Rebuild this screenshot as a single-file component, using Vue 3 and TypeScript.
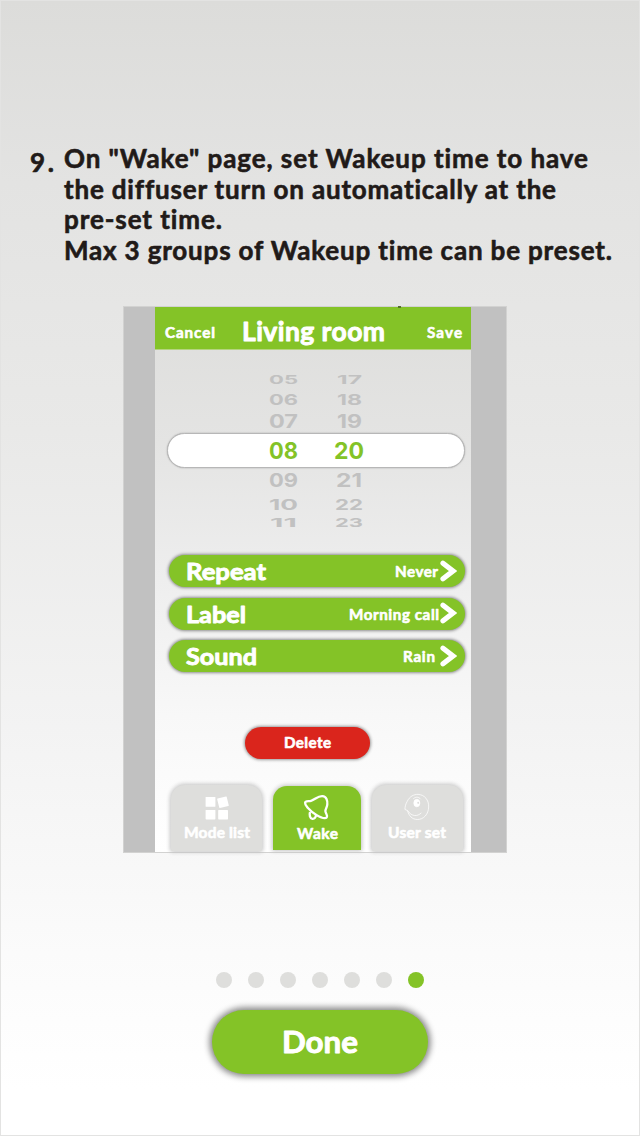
<script setup lang="ts">
import { h } from 'vue'

interface LabelProps {
  text: string
  w: number
  size: number
  box: number
  base: number
  stretch?: boolean
}

// One line of text fitted to a given width, with its baseline at `base` inside a box of height `box`.
const FitText = (p: LabelProps) =>
  h('svg', { width: p.w, height: p.box, class: 'fit' }, [
    h(
      'text',
      {
        x: 0,
        y: p.base,
        'font-size': p.size,
        textLength: p.w,
        lengthAdjust: p.stretch ? 'spacingAndGlyphs' : 'spacing'
      },
      p.text
    )
  ])
FitText.props = ['text', 'w', 'size', 'box', 'base', 'stretch']

const lines = [
  { text: 'On "Wake" page, set Wakeup time to have', w: 524 },
  { text: 'the diffuser turn on automatically at the', w: 492 },
  { text: 'pre-set time.', w: 158 },
  { text: 'Max 3 groups of Wakeup time can be preset.', w: 548 }
]

// Each wheel row: hour, minute, box height, glyph size, baseline and widths.
const wheel = [
  { a: '05', b: '17', box: 17, base: 14, size: 11.6, wa: 29, wb: 25 },
  { a: '06', b: '18', box: 20, base: 18.3, size: 15, wa: 29, wb: 25 },
  { a: '07', b: '19', box: 26, base: 21, size: 18.6, wa: 29, wb: 25 },
  { a: '08', b: '20', box: 35, base: 25, size: 23, wa: 29, wb: 30, on: true },
  { a: '09', b: '21', box: 26, base: 18.8, size: 18.8, wa: 29, wb: 26 },
  { a: '10', b: '22', box: 19, base: 16, size: 15, wa: 29, wb: 28 },
  { a: '11', b: '23', box: 19, base: 14, size: 12, wa: 27, wb: 28 }
]

const rows = [
  { name: 'Repeat', nw: 80, value: 'Never', vw: 43, gap: 2 },
  { name: 'Label', nw: 60, value: 'Morning call', vw: 90, gap: 1 },
  { name: 'Sound', nw: 71, value: 'Rain', vw: 32, gap: 5 }
]

const dots = [0, 1, 2, 3, 4, 5, 6]
</script>

<template>
  <main class="page">
    <section class="step">
      <FitText class="num" text="9." :w="24" :size="26" :box="31" :base="27.3" />
      <div class="lines">
        <FitText v-for="l in lines" :key="l.text" :text="l.text" :w="l.w" :size="26" :box="30.6" :base="24" />
      </div>
    </section>

    <section class="device">
      <i class="speck"></i>
      <div class="screen">
        <header class="bar">
          <FitText text="Cancel" :w="50" :size="15.2" :box="43" :base="31" />
          <FitText class="title" text="Living room" :w="143" :size="26.5" :box="43" :base="34" />
          <FitText text="Save" :w="35" :size="15.2" :box="43" :base="31" />
        </header>

        <div class="wheel">
          <div v-for="r in wheel" :key="r.a" class="tick" :class="{ on: r.on }">
            <span class="cell"><FitText :stretch="true" :text="r.a" :w="r.wa" :size="r.size" :box="r.box" :base="r.base" /></span>
            <span class="cell"><FitText :stretch="true" :text="r.b" :w="r.wb" :size="r.size" :box="r.box" :base="r.base" /></span>
          </div>
        </div>

        <div class="options">
          <div v-for="r in rows" :key="r.name" class="option">
            <FitText class="heavy" :stretch="true" :text="r.name" :w="r.nw" :size="23.5" :box="32" :base="24.7" />
            <span class="fill"></span>
            <FitText :text="r.value" :w="r.vw" :size="15.2" :box="32" :base="22" />
            <svg class="chev" :class="'gap' + r.gap" width="17" height="22" viewBox="0 0 17 22">
              <path d="M3 3.2 L13 11 L3 18.8" />
            </svg>
          </div>
        </div>

        <div class="delete"><FitText text="Delete" :w="47" :size="15.2" :box="32" :base="21" /></div>

        <nav class="tabs">
          <div class="tab">
            <svg class="icon" width="28" height="28" viewBox="0 0 28 28">
              <rect x="2.6" y="4" width="9.8" height="9.8" rx=".6" />
              <rect x="15" y="4.3" width="9.8" height="9.8" rx=".6" transform="rotate(-14 20 9)" />
              <rect x="2.6" y="17" width="9.8" height="9.4" rx=".6" />
              <rect x="15.2" y="17" width="9.8" height="9.4" rx=".6" />
            </svg>
            <FitText text="Mode list" :w="66" :size="15.5" :box="24" :base="17" />
          </div>
          <div class="tab active">
            <svg class="icon line" width="28" height="28" viewBox="0 0 28 28">
              <path d="M2.1 8.7 C2.3 6.8 5.3 7.4 8 6.8 C12.2 5.8 14.4 2 19.3 2.2 C23.6 2.5 24.6 6.5 24.3 10.4 C24.2 13.2 22.4 14.9 22.4 17.3 C22.5 19.4 25 21.4 23.8 23.2 C22.4 25.1 18.1 23.8 13.8 21.3 C9.5 19 6.9 16.1 4.4 13.4 C3 11.9 2 10.3 2.1 8.7 Z" />
              <path d="M7 18 C6.2 20.8 6.8 24.6 9.4 24.8 C11.7 25 12.8 23.3 13 21" />
            </svg>
            <FitText text="Wake" :w="41" :size="15.5" :box="24" :base="17" />
          </div>
          <div class="tab user">
            <svg class="icon face" width="28" height="30" viewBox="0 0 28 30">
              <path d="M3.5 9 C6 3.8 10.5 1.3 15.2 1.5 C22.2 1.8 26.7 7.5 26.5 15 C26.3 22.7 21.2 28.5 14.2 28.4 C8.9 28.2 5.4 24.7 3.8 18.8 L1.1 17.6 C1.2 14.2 1.9 11.7 3.5 9 Z" />
              <path d="M3.8 18.8 C8.7 25.8 14.4 25.2 18.7 21.3 M10 6.2 C12.8 3.7 16 4.2 18 6.7" />
              <ellipse class="white" cx="13.8" cy="10.8" rx="3.2" ry="4" />
              <ellipse class="pupil" cx="15.2" cy="10.5" rx=".7" ry="1.2" />
            </svg>
            <FitText text="User set" :w="58" :size="15.5" :box="24" :base="17" />
          </div>
        </nav>
      </div>
    </section>

    <div class="dots"><i v-for="d in dots" :key="d" :class="{ current: d === 6 }"></i></div>
    <button class="done"><FitText class="heavy" :stretch="true" text="Done" :w="76" :size="30" :box="64" :base="43" /></button>
  </main>
</template>

<style>
body { margin: 0; }
.fit { display: block; overflow: visible; flex: none; }
.fit text {
  fill: currentColor;
  stroke: currentColor;
  stroke-width: 0.6px;
  stroke-linejoin: round;
  font-weight: 700;
  font-variant-ligatures: none;
}
.heavy text, .title text { stroke-width: 0.9px; }
.tick text { font-family: Inter, sans-serif; stroke-width: 0; }
</style>

<style scoped>
.page {
  box-sizing: border-box;
  width: 640px;
  height: 1136px;
  padding-top: 143px;
  border: 1px solid #e3e3e2;
  background: linear-gradient(#dcdcda 0%, #e3e3e2 16%, #e9e9e8 38%, #f3f3f3 64%, #fbfbfb 84%, #fff 96%);
  color: #211a18;
  font-family: Lato, "Liberation Sans", sans-serif;
}
.step { display: flex; height: 162px; padding-left: 29px; }
.num { padding-top: 1px; }
.lines { padding-left: 10px; }
.device {
  position: relative;
  box-sizing: border-box;
  width: 384px;
  height: 547px;
  margin-left: 122px;
  padding: 0 35px 0 31px;
  border: 1px solid #d2d2d1;
  background: #c1c1c1;
}
.speck {
  position: absolute;
  left: 274px;
  top: -1px;
  width: 3px;
  height: 2px;
  background: #55702f;
}
.screen {
  height: 545px;
  background: linear-gradient(#dededc, #e4e4e3 25%, #eeeeee 50%, #f8f8f8 75%, #fff);
}
.bar {
  display: flex;
  justify-content: space-between;
  box-sizing: border-box;
  height: 43px;
  padding: 0 9px 0 10px;
  border-bottom: 1px solid #b5d47f;
  background: #84c327;
  color: #fff;
}
.title { margin-right: 15px; }
.wheel { height: 205px; padding: 20px 6px 0 12px; color: #c1c1c1; }
.tick { display: flex; padding-left: 84px; }
.tick.on {
  box-sizing: border-box;
  height: 34.5px;
  padding-left: 82.5px;
  border: 1.5px solid #b7b7b7;
  border-radius: 18px;
  background: #fff;
  color: #84c327;
  box-shadow: 0 0 1.5px #999;
}
.cell { display: flex; justify-content: center; width: 65.5px; }
.options { display: flex; flex-direction: column; gap: 10.5px; padding: 0 6.5px 0 14px; margin-top: -20px; }
.option {
  display: flex;
  align-items: center;
  height: 32px;
  padding: 0 8px 0 16.5px;
  border-radius: 17px;
  background: #84c327;
  color: #fff;
  box-shadow: 0 0 3px 1px #8d8d8d;
}
.fill { flex: 1; }
.chev { fill: none; stroke: #fff; stroke-width: 5.2; stroke-linecap: round; margin-top: -1px; }
.gap2 { margin-left: 2px; }
.gap1 { margin-left: 1px; }
.gap5 { margin-left: 4.5px; }
.delete {
  display: flex;
  justify-content: center;
  width: 125px;
  height: 32px;
  margin: 54.5px 0 0 90px;
  border-radius: 16px;
  background: #da251c;
  color: #fff;
  box-shadow: 0 0 3px 1px #999;
}
.tabs { display: flex; align-items: flex-start; gap: 11px; padding-left: 16px; margin-top: 26px; }
.tab {
  display: flex;
  flex-direction: column;
  align-items: center;
  box-sizing: border-box;
  width: 91px;
  height: 66px;
  padding-top: 8px;
  border-radius: 14px 14px 2px 2px;
  background: #dededc;
  color: #fff;
  box-shadow: 0 0 4px 1px #c2c2c2;
}
.tab.active {
  width: 88px;
  height: 64px;
  margin-top: 1px;
  border-radius: 14px 14px 0 0;
  background: #84c327;
}
.tab.user { padding-right: 1px; }
.icon { flex: none; height: 28px; fill: #fff; }
.line { fill: none; stroke: #fff; stroke-width: 2.3; stroke-linejoin: round; }
.face { fill: none; stroke: #fff; stroke-width: 0.8; }
.white { fill: #fff; }
.pupil { fill: #cfcfcd; stroke: none; }
.dots { display: flex; gap: 16px; padding-left: 215px; margin-top: 119px; }
.dots i { width: 16px; height: 16px; border-radius: 50%; background: #dededc; }
.dots .current { background: #84c327; }
.done {
  display: flex;
  justify-content: center;
  width: 216px;
  height: 64px;
  margin: 22px 0 0 211px;
  padding: 0;
  border: 0;
  border-radius: 32px;
  background: #84c327;
  color: #fff;
  font-family: inherit;
  box-shadow: 0 0 6px 2.5px #858585;
}
</style>
